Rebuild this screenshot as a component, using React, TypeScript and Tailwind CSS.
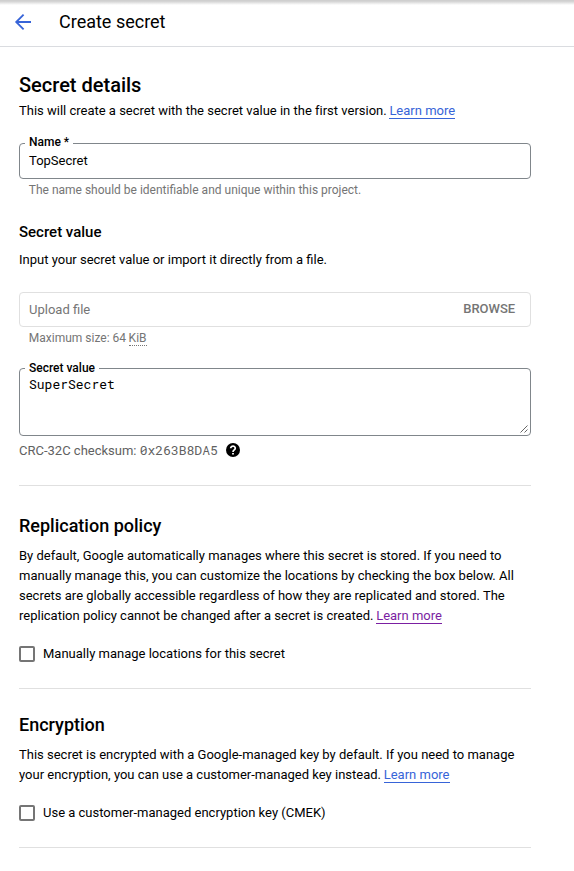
import React from "react";

function Lines({ children }: { children: React.ReactNode }) {
  return <p className="mt-2 flex flex-col whitespace-nowrap">{children}</p>;
}

function Learn({ visited = false }: { visited?: boolean }) {
  return (
    <a
      className={
        visited
          ? "-ml-[0.5px] border-b border-[#7b1fa2] text-[#7b1fa2]"
          : "-ml-[0.5px] border-b border-[#3764d8] text-[#3764d8]"
      }
    >
      Learn more
    </a>
  );
}

function Check({ label }: { label: string }) {
  return (
    <label className="mt-[18px] flex h-5 items-center gap-2">
      <span className="h-4 w-4 rounded-[2px] border-2 border-[#757575]" />
      <span>{label}</span>
    </label>
  );
}

export default function App() {
  return (
    <div className="h-[871px] w-[574px] overflow-hidden bg-white font-['Roboto',sans-serif] text-[13px] leading-5 text-black">
      <header className="flex h-[47px] items-center border-b border-[#dadce0] bg-linear-to-b from-[#cfcfcf] from-[1px] to-white to-[5px] pb-[2px] pl-[11px]">
        <svg className="h-6 w-6" viewBox="0 0 24 24" fill="none" stroke="#3764d8" strokeWidth="1.8">
          <path d="M20 12H5.4M12.6 4.6L5.2 12l7.4 7.4" />
        </svg>
        <h1 className="ml-6 text-[18px] leading-6">Create secret</h1>
      </header>
      <main className="ml-[19px] w-[512px]">
        <h2 className="pt-[26px] text-[20px] font-medium leading-6">Secret details</h2>
        <p className="mt-[4px] whitespace-nowrap tracking-[-0.004px]">
          This will create a secret with the secret value in the first version. <Learn />
        </p>

        <div className="relative mt-[22px] h-9 rounded-[4px] border border-[#80868b] pl-[9px] pt-[7px]">
          <span className="absolute -top-[12px] left-[5px] bg-white px-1 text-[12px] font-medium">Name *</span>
          TopSecret
        </div>
        <p className="ml-[9.8px] mt-[1px] text-[12px] text-[#757575]">
          The name should be identifiable and unique within this project.
        </p>

        <h3 className="mt-[22px] text-[15px] font-medium">Secret value</h3>
        <p className="mt-2">Input your secret value or import it directly from a file.</p>
        <div className="mt-[22px] flex h-[35px] items-center justify-between rounded-[4px] border border-[#e0e0e0] pl-[9px] pr-[14.8px] text-[#757575]">
          <span>Upload file</span>
          <span className="pb-[2px] font-medium">BROWSE</span>
        </div>
        <p className="ml-[9.8px] mt-[1px] text-[12px] text-[#757575]">
          Maximum size: 64 <span className="-ml-[0.4px] border-b border-dotted border-[#757575]">KiB</span>
        </p>

        <div className="relative mt-[20px] h-[68px] rounded-[4px] border border-[#80868b] pl-[9px] pt-[5px] font-['Roboto_Mono','DejaVu_Sans_Mono',monospace]">
          <span className="absolute -top-[11px] left-[5px] bg-white px-1 font-['Roboto',sans-serif] text-[12px] font-medium">
            Secret value
          </span>
          SuperSecret
          <svg className="absolute bottom-[2px] right-[2px] h-2 w-2" viewBox="0 0 8 8" stroke="#555" strokeWidth="0.9">
            <path d="M0.5 7.5l7-7M4.5 7.5l3-3" />
          </svg>
        </div>
        <div className="mt-[5px] flex h-5 items-center whitespace-pre text-[#616161]">
          <span>CRC-32C checksum: </span>
          <span className="pb-[2px] font-['Roboto_Mono','DejaVu_Sans_Mono',monospace]">0x263B8DA5</span>
          <svg className="mb-[2px] ml-[8px] h-[14px] w-[14px]" viewBox="0 0 14 14" fill="none">
            <circle cx="7" cy="7" r="7" fill="#000" />
            <path d="M4.7 5.3a2.3 2.1 0 1 1 3.7 1.5C7.5 7.5 7 7.8 7 9" stroke="#fff" strokeWidth="1.7" />
            <path d="M6.1 9.9h1.8v1.7H6.1z" fill="#fff" />
          </svg>
        </div>

        <section className="mt-[24px] border-t border-[#e0e0e0] pt-[28px]">
          <h2 className="text-[18px] font-medium leading-6">Replication policy</h2>
          <Lines>
            <span>By default, Google automatically manages where this secret is stored. If you need to</span>
            <span>manually manage this, you can customize the locations by checking the box below. All</span>
            <span>secrets are globally accessible regardless of how they are replicated and stored. The</span>
            <span>replication policy cannot be changed after a secret is created. <Learn visited /></span>
          </Lines>
          <Check label="Manually manage locations for this secret" />
        </section>

        <section className="mt-[24px] border-t border-[#e0e0e0] pt-[24px]">
          <h2 className="text-[18px] font-medium leading-6">Encryption</h2>
          <Lines>
            <span>This secret is encrypted with a Google-managed key by default. If you need to manage</span>
            <span>your encryption, you can use a customer-managed key instead. <Learn /></span>
          </Lines>
          <Check label="Use a customer-managed encryption key (CMEK)" />
        </section>
        <div className="mt-[24px] border-t border-[#e0e0e0]" />
      </main>
    </div>
  );
}
